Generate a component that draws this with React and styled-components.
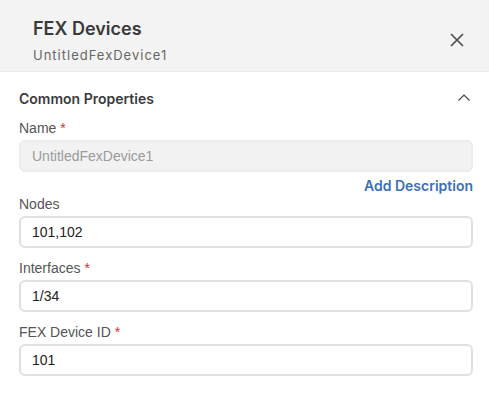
import React from "react";
import styled, { createGlobalStyle } from "styled-components";

const Global = createGlobalStyle`
  html, body { margin: 0; padding: 0; background: #fff; }
  body { font-family: "Liberation Sans", Arial, sans-serif; }
  * { box-sizing: border-box; }
`;

const Panel = styled.div`
  width: 489px;
  height: 398px;
  background: #fff;
  display: flex;
  flex-direction: column;
`;

const Header = styled.header`
  height: 72px;
  background: #f3f3f3;
  display: flex;
  align-items: center;
  justify-content: space-between;
  padding: 0 22px 0 33px;
  border-bottom: 1px solid #ececec;
`;

const TitleBlock = styled.div`
  display: flex;
  flex-direction: column;
  gap: 7px;
  padding-top: 10px;
`;

const Title = styled.h1`
  margin: 0;
  font-family: Inter, "Noto Sans", sans-serif;
  font-weight: 600;
  font-size: 18px;
  line-height: 22px;
  color: #3a3a3a;
`;

const Subtitle = styled.div`
  font-family: Inter, "Noto Sans", sans-serif;
  font-weight: 400;
  font-size: 13px;
  line-height: 16px;
  letter-spacing: 1px;
  color: #666;
`;

const IconButton = styled.button`
  border: 0;
  background: none;
  padding: 0;
  width: 20px;
  height: 20px;
  display: flex;
  align-items: center;
  justify-content: center;
  color: #4a4a4a;
  margin-top: 8px;
`;

const Body = styled.div`
  padding: 16px 16px 0 19px;
  display: flex;
  flex-direction: column;
`;

const SectionHead = styled.div`
  display: flex;
  align-items: center;
  justify-content: space-between;
  height: 20px;
  margin-bottom: 12px;
`;

const SectionTitle = styled.h2`
  margin: 0;
  font-family: Inter, "Noto Sans", sans-serif;
  font-weight: 600;
  font-size: 14px;
  color: #3a3a3a;
`;

const Field = styled.div`
  display: flex;
  flex-direction: column;
  margin-bottom: ${(p) => p.$mb ?? 12}px;
`;

const Label = styled.label`
  font-size: 14px;
  line-height: 16px;
  color: #555;
  margin-bottom: 4px;
`;

const Star = styled.span`
  color: #d0312d;
`;

const Input = styled.input`
  height: 32px;
  width: 454px;
  border: 2px solid #e0e0e0;
  border-radius: 6px;
  padding: 0 11px;
  font-family: "Liberation Sans", Arial, sans-serif;
  font-size: 14px;
  color: #222;
  background: #fff;
  outline: none;
  &:disabled {
    background: #f2f2f2;
    color: #9a9a9a;
    border-color: #ececec;
  }
`;

const LinkRow = styled.div`
  width: 454px;
  display: flex;
  justify-content: flex-end;
  margin-top: 4px;
`;

const Link = styled.a`
  font-family: Inter, "Noto Sans", sans-serif;
  font-weight: 600;
  font-size: 14px;
  line-height: 20px;
  color: #3a6fba;
  text-decoration: none;
`;

export default function App() {
  return (
    <>
      <Global />
      <Panel>
        <Header>
          <TitleBlock>
            <Title>FEX Devices</Title>
            <Subtitle>UntitledFexDevice1</Subtitle>
          </TitleBlock>
          <IconButton aria-label="Close">
            <svg width="16" height="16" viewBox="0 0 16 16">
              <path d="M2 2 L14 14 M14 2 L2 14" stroke="currentColor" strokeWidth="1.6" fill="none" />
            </svg>
          </IconButton>
        </Header>
        <Body>
          <SectionHead>
            <SectionTitle>Common Properties</SectionTitle>
            <svg width="14" height="10" viewBox="0 0 14 10" style={{ marginRight: 2 }}>
              <path d="M1.5 7.5 L7 2 L12.5 7.5" stroke="#444" strokeWidth="1.2" fill="none" />
            </svg>
          </SectionHead>
          <Field $mb={0}>
            <Label>Name <Star>*</Star></Label>
            <Input disabled value="UntitledFexDevice1" readOnly />
          </Field>
          <LinkRow>
            <Link href="#">Add Description</Link>
          </LinkRow>
          <Field>
            <Label>Nodes</Label>
            <Input value="101,102" readOnly />
          </Field>
          <Field>
            <Label>Interfaces <Star>*</Star></Label>
            <Input value="1/34" readOnly />
          </Field>
          <Field>
            <Label>FEX Device ID <Star>*</Star></Label>
            <Input value="101" readOnly />
          </Field>
        </Body>
      </Panel>
    </>
  );
}
